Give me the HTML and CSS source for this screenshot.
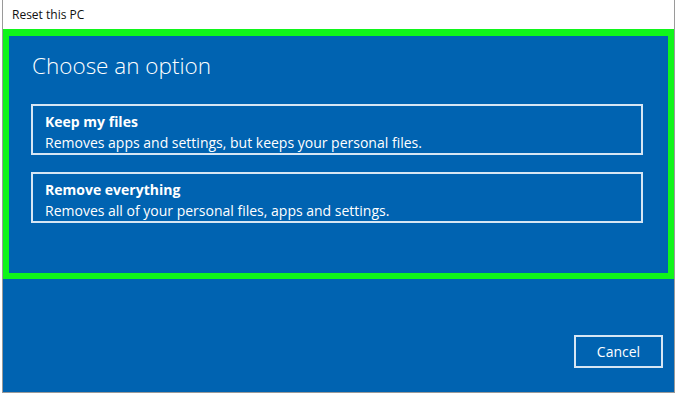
FILE: index.html
```html
<!DOCTYPE html>
<html lang="en">
<head>
    <meta charset="UTF-8">
    <title>Reset this PC</title>
    <link rel="stylesheet" href="styles.css">
</head>
<body>
    <div class="window">
        <div class="titlebar">Reset this PC</div>
        <div class="content">
            <div class="highlight">
                <h1 class="heading">Choose an option</h1>
                <div class="option">
                    <div class="option-title">Keep my files</div>
                    <div class="option-desc">Removes apps and settings, but keeps your personal files.</div>
                </div>
                <div class="option">
                    <div class="option-title">Remove everything</div>
                    <div class="option-desc">Removes all of your personal files, apps and settings.</div>
                </div>
            </div>
            <div class="footer">
                <button class="cancel-btn">Cancel</button>
            </div>
        </div>
    </div>
</body>
</html>
```

FILE: styles.css
```css
* {
    margin: 0;
    padding: 0;
    box-sizing: border-box;
}

body {
    background: #fff;
    font-family: 'Open Sans', 'Noto Sans', sans-serif;
    width: 675px;
    height: 394px;
    overflow: hidden;
}

.window {
    margin-left: 2px;
    width: 673px;
    height: 393px;
    border: 1px solid #9a9a9a;
    border-top: none;
    display: flex;
    flex-direction: column;
}

.titlebar {
    height: 29px;
    background: #fff;
    color: #111;
    font-size: 12px;
    padding: 6px 0 0 9px;
}

.content {
    flex: 1;
    background: #0063b1;
    display: flex;
    flex-direction: column;
}

.highlight {
    height: 250px;
    border: 6px solid #10f51a;
    border-top-width: 7px;
    padding: 15px 25px 0 22px;
}

.heading {
    color: #fff;
    font-size: 22.5px;
    font-weight: 300;
    margin-left: 1px;
    line-height: 30px;
    margin-bottom: 23px;
}

.option {
    border: 2px solid #d6e6f4;
    height: 51px;
    padding: 6px 12px 0;
    color: #fff;
    margin-bottom: 17px;
}

.option-title {
    font-weight: 700;
    font-size: 14px;
    line-height: 20px;
}

.option-desc {
    font-size: 14px;
    line-height: 21px;
}

.footer {
    flex: 1;
    display: flex;
    justify-content: flex-end;
    align-items: flex-end;
    padding: 0 11px 24px 0;
}

.cancel-btn {
    width: 89px;
    height: 33px;
    background: transparent;
    border: 2px solid #d6e6f4;
    color: #fff;
    font-family: inherit;
    font-size: 14px;
}
```
